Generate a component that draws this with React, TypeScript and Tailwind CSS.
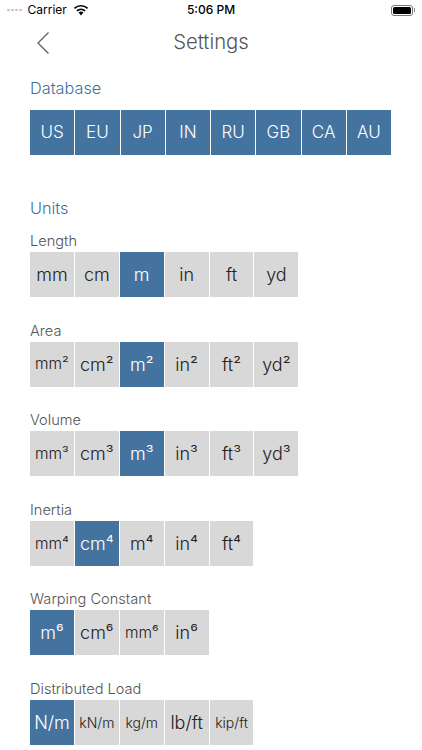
type Row = {
  label: string;
  units: string[];
  selected: number;
  small?: string[];
  tiny?: string[];
};

const databases = ['US', 'EU', 'JP', 'IN', 'RU', 'GB', 'CA', 'AU'];

const rows: Row[] = [
  { label: 'Length', units: ['mm', 'cm', 'm', 'in', 'ft', 'yd'], selected: 2 },
  { label: 'Area', units: ['mm²', 'cm²', 'm²', 'in²', 'ft²', 'yd²'], selected: 2, small: ['mm²'] },
  { label: 'Volume', units: ['mm³', 'cm³', 'm³', 'in³', 'ft³', 'yd³'], selected: 2, small: ['mm³'] },
  { label: 'Inertia', units: ['mm⁴', 'cm⁴', 'm⁴', 'in⁴', 'ft⁴'], selected: 1, small: ['mm⁴'] },
  { label: 'Warping Constant', units: ['m⁶', 'cm⁶', 'mm⁶', 'in⁶'], selected: 0, small: ['mm⁶'] },
  {
    label: 'Distributed Load',
    units: ['N/m', 'kN/m', 'kg/m', 'lb/ft', 'kip/ft'],
    selected: 0,
    tiny: ['kN/m', 'kg/m', 'kip/ft'],
  },
];

const Cell = ({ text, active, size }: { text: string; active: boolean; size: 'big' | 'small' | 'tiny' }) => (
  <div
    className={`flex h-[45px] w-[43.9px] items-center justify-center font-light ${
      size === 'tiny' ? 'text-[14px]' : size === 'small' ? 'text-[15.5px]' : 'text-[18px]'
    } ${active ? 'bg-[#4573a0] text-white' : 'bg-[#d8d8d8] text-[#222222]'}`}
  >
    {text}
  </div>
);

const App = () => {
  return (
    <div className="h-[750px] w-[422px] overflow-hidden bg-white font-['Inter',sans-serif]">
      {/* Status bar */}
      <div className="flex h-[20px] items-center justify-between pl-[7px] pr-[7px] text-[12px] text-black">
        <div className="flex w-[140px] items-center">
          <div className="mr-[6px] flex gap-[1.5px]">
            <span className="h-[2px] w-[2.5px] rounded-full bg-[#c4c4c4]" />
            <span className="h-[2px] w-[2.5px] rounded-full bg-[#c4c4c4]" />
            <span className="h-[2px] w-[2.5px] rounded-full bg-[#c4c4c4]" />
            <span className="h-[2px] w-[2.5px] rounded-full bg-[#c4c4c4]" />
          </div>
          <span>Carrier</span>
          <svg className="ml-[6px]" width="16" height="12" viewBox="0 0 16 12">
            <path d="M8 11.5 L5.6 8.6 A3.6 3.6 0 0 1 10.4 8.6 Z" fill="#000" />
            <path d="M3.9 6.9 A6.2 6.2 0 0 1 12.1 6.9" fill="none" stroke="#000" strokeWidth="1.7" />
            <path d="M1.4 4.3 A9.8 9.8 0 0 1 14.6 4.3" fill="none" stroke="#000" strokeWidth="1.7" />
          </svg>
        </div>
        <span className="font-medium">5:06 PM</span>
        <div className="flex w-[140px] items-center justify-end">
          <div className="flex h-[11px] w-[22px] items-center rounded-[3px] border border-[#777777] p-[1px]">
            <div className="h-full w-full rounded-[1.5px] bg-black" />
          </div>
          <div className="ml-[1px] h-[4px] w-[1px] bg-[#888888]" />
        </div>
      </div>

      {/* Nav */}
      <div className="relative flex h-[44px] items-center justify-center">
        <svg className="absolute left-[36px] top-[11px]" width="14" height="24" viewBox="0 0 14 24">
          <path d="M12.5 1.5 L2 12 L12.5 22.5" fill="none" stroke="#666666" strokeWidth="1.4" />
        </svg>
        <h1 className="text-[20.3px] font-light text-[#555555]">Settings</h1>
      </div>

      <div className="px-[30px]">
        <h2 className="mt-[13px] text-[16.3px] font-light leading-[22px] text-[#3f6f9e]">Database</h2>
        <div className="mt-[11px] flex gap-[1px]">
          {databases.map((db) => (
            <div
              key={db}
              className="flex h-[45px] w-[44.25px] items-center justify-center bg-[#4573a0] text-[17px] font-light text-white"
            >
              {db}
            </div>
          ))}
        </div>

        <h2 className="mt-[42px] text-[16.3px] font-light leading-[22px] text-[#3f6f9e]">Units</h2>

        <div className="mt-[13px] flex flex-col gap-[24.6px]">
          {rows.map((row) => (
            <div key={row.label}>
              <div className="mb-[2px] text-[14.6px] font-light leading-[18px] text-[#555555]">{row.label}</div>
              <div className="flex gap-[1px]">
                {row.units.map((u, i) => (
                  <Cell
                    key={u}
                    text={u}
                    active={i === row.selected}
                    size={row.tiny?.includes(u) ? 'tiny' : row.small?.includes(u) ? 'small' : 'big'}
                  />
                ))}
              </div>
            </div>
          ))}
        </div>
      </div>
    </div>
  );
};

export default App;
